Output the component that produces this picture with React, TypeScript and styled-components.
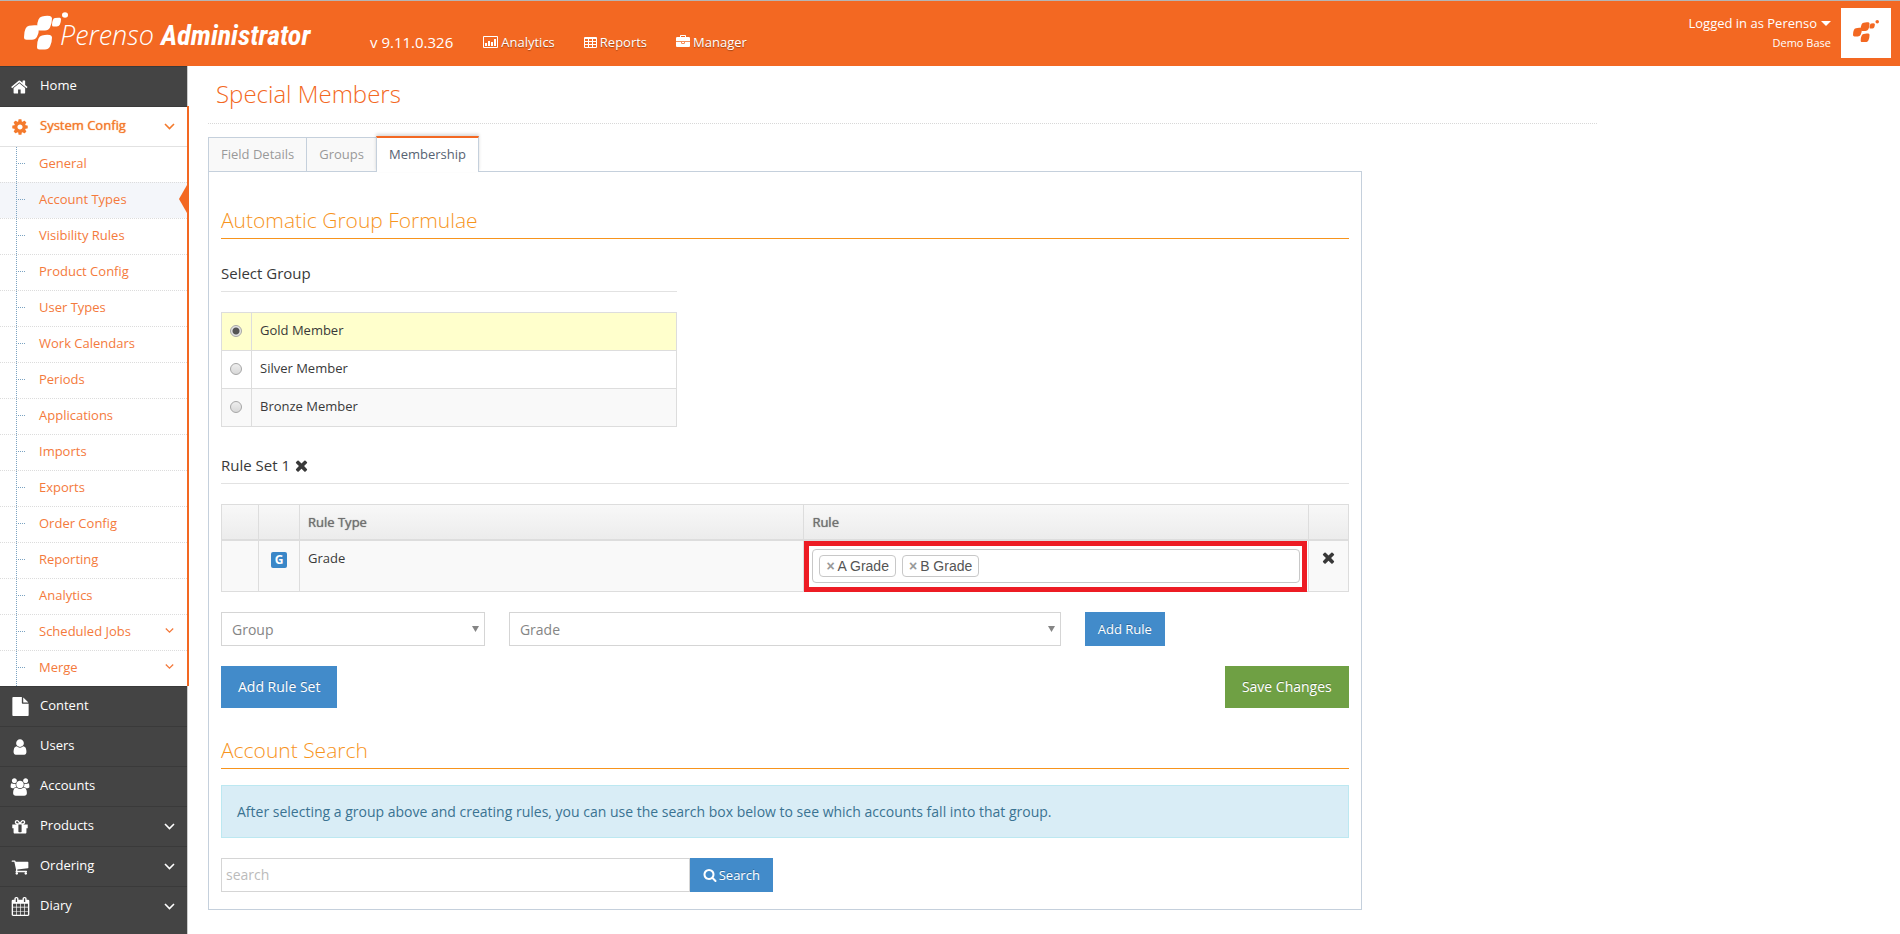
import React, { useState } from "react";
import styled, { createGlobalStyle, css } from "styled-components";

const brand = "#f36822";
const amber = "#f7941d";
const blue = "#428bca";

const Global = createGlobalStyle`
  * { box-sizing: border-box; }
  body {
    margin: 0;
    background: #fff;
    color: #393939;
    font: 13px/20px "Open Sans", sans-serif;
  }
  h1, h2, h3, ul { margin: 0; padding: 0; font-weight: 400; }
  ul { list-style: none; }
  a { color: inherit; text-decoration: none; }
  button, input, select { font-family: inherit; margin: 0; }
`;

/* ---------- icons ---------- */

const paths = {
  home: "M1408 992v480q0 26-19 45t-45 19h-384v-384h-256v384h-384q-26 0-45-19t-19-45v-480q0-1 .5-3t.5-3l575-474 575 474q1 2 1 6zm223-69l-62 74q-8 9-21 11h-3q-13 0-21-7l-692-577-692 577q-12 8-24 7-13-2-21-11l-62-74q-8-10-7-23.5t11-21.5l719-599q32-26 76-26t76 26l244 204v-195q0-14 9-23t23-9h192q14 0 23 9t9 23v408l219 182q10 8 11 21.5t-7 23.5z",
  cog: "M1152 896q0-106-75-181t-181-75-181 75-75 181 75 181 181 75 181-75 75-181zm512-109v222q0 12-8 23t-20 13l-185 28q-19 54-39 91 35 50 107 138 10 12 10 25t-9 23q-27 37-99 108t-94 71q-12 0-26-9l-138-108q-44 23-91 38-16 136-29 186-7 28-36 28h-222q-14 0-24.5-8.5t-11.5-21.5l-28-184q-49-16-90-37l-141 107q-10 9-25 9-14 0-25-11-126-114-165-168-7-10-7-23 0-12 8-23 15-21 51-66.5t54-70.5q-27-50-41-99l-183-27q-13-2-21-12.5t-8-23.5v-222q0-12 8-23t19-13l186-28q14-46 39-92-40-57-107-138-10-12-10-24 0-10 9-23 26-36 98.5-107.5t94.5-71.5q13 0 26 10l138 107q44-23 91-38 16-136 29-186 7-28 36-28h222q14 0 24.5 8.5t11.5 21.5l28 184q49 16 90 37l142-107q9-9 24-9 13 0 25 10 129 119 165 170 7 8 7 22 0 12-8 23-15 21-51 66.5t-54 70.5q26 50 41 98l183 28q13 2 21 12.5t8 23.5z",
  file: "M1152 512v-472q22 14 36 28l408 408q14 14 28 36h-472zm-128 32q0 40 28 68t68 28h544v1056q0 40-28 68t-68 28h-1344q-40 0-68-28t-28-68v-1600q0-40 28-68t68-28h800v544z",
  user: "M1536 1399q0 109-62.5 187t-150.5 78h-854q-88 0-150.5-78t-62.5-187q0-85 8.5-160.5t31.5-152 58.5-131 94-89 134.5-34.5q131 128 313 128t313-128q76 0 134.5 34.5t94 89 58.5 131 31.5 152 8.5 160.5zm-256-887q0 159-112.5 271.5t-271.5 112.5-271.5-112.5-112.5-271.5 112.5-271.5 271.5-112.5 271.5 112.5 112.5 271.5z",
  users: "M657 896q-162 5-265 128h-134q-82 0-138-40.5t-56-118.5q0-353 124-353 6 0 43.5 21t97.5 42.5 119 21.5q67 0 133-23-5 37-5 66 0 139 81 256zm1071 637q0 120-73 189.5t-194 69.5h-874q-121 0-194-69.5t-73-189.5q0-53 3.5-103.5t14-109 26.5-108.5 43-97.5 62-81 85.5-53.5 111.5-20q10 0 43 21.5t73 48 107 48 135 21.5 135-21.5 107-48 73-48 43-21.5q61 0 111.5 20t85.5 53.5 62 81 43 97.5 26.5 108.5 14 109 3.5 103.5zm-1024-1277q0 106-75 181t-181 75-181-75-75-181 75-181 181-75 181 75 75 181zm704 384q0 159-112.5 271.5t-271.5 112.5-271.5-112.5-112.5-271.5 112.5-271.5 271.5-112.5 271.5 112.5 112.5 271.5zm576 225q0 78-56 118.5t-138 40.5h-134q-103-123-265-128 81-117 81-256 0-29-5-66 66 23 133 23 59 0 119-21.5t97.5-42.5 43.5-21q124 0 124 353zm-128-609q0 106-75 181t-181 75-181-75-75-181 75-181 181-75 181 75 75 181z",
  gift: "M1056 1356v-716h-320v716q0 25 18 38.5t46 13.5h192q28 0 46-13.5t18-38.5zm-456-844h195l-126-161q-26-31-69-31-40 0-68 28t-28 68 28 68 68 28zm688-96q0-40-28-68t-68-28q-43 0-69 31l-125 161h194q40 0 68-28t28-68zm376 256v320q0 14-9 23t-23 9h-96v416q0 40-28 68t-68 28h-1088q-40 0-68-28t-28-68v-416h-96q-14 0-23-9t-9-23v-320q0-14 9-23t23-9h440q-93 0-158.5-65.5t-65.5-158.5 65.5-158.5 158.5-65.5q107 0 168 77l128 165 128-165q61-77 168-77 93 0 158.5 65.5t65.5 158.5-65.5 158.5-158.5 65.5h440q14 0 23 9t9 23z",
  cart: "M704 1536q0 52-38 90t-90 38-90-38-38-90 38-90 90-38 90 38 38 90zm896 0q0 52-38 90t-90 38-90-38-38-90 38-90 90-38 90 38 38 90zm128-1088v512q0 24-16.5 42.5t-40.5 21.5l-1044 122q13 60 13 70 0 16-24 64h920q26 0 45 19t19 45-19 45-45 19h-1024q-26 0-45-19t-19-45q0-11 8-31.5t16-36 21.5-40 15.5-29.5l-177-823h-204q-26 0-45-19t-19-45 19-45 45-19h256q16 0 28.5 6.5t19.5 15.5 13 24.5 8 26 5.5 29.5 4.5 26h1201q26 0 45 19t19 45z",
  calendar: "M192 1664h288v-288h-288v288zm352 0h320v-288h-320v288zm-352-352h288v-320h-288v320zm352 0h320v-320h-320v320zm-352-384h288v-288h-288v288zm736 736h320v-288h-320v288zm-384-736h320v-288h-320v288zm768 736h288v-288h-288v288zm-384-352h320v-320h-320v320zm-352-864v-288q0-13-9.5-22.5t-22.5-9.5h-64q-13 0-22.5 9.5t-9.5 22.5v288q0 13 9.5 22.5t22.5 9.5h64q13 0 22.5-9.5t9.5-22.5zm736 864h288v-320h-288v320zm-384-384h320v-288h-320v288zm384 0h288v-288h-288v288zm32-480v-288q0-13-9.5-22.5t-22.5-9.5h-64q-13 0-22.5 9.5t-9.5 22.5v288q0 13 9.5 22.5t22.5 9.5h64q13 0 22.5-9.5t9.5-22.5zm384-64v1280q0 52-38 90t-90 38h-1408q-52 0-90-38t-38-90v-1280q0-52 38-90t90-38h128v-96q0-66 47-113t113-47h64q66 0 113 47t47 113v96h384v-96q0-66 47-113t113-47h64q66 0 113 47t47 113v96h128q52 0 90 38t38 90z",
  briefcase: "M640 256h512v-128h-512v128zm1152 640v480q0 66-47 113t-113 47h-1472q-66 0-113-47t-47-113v-480h672v160q0 26 19 45t45 19h320q26 0 45-19t19-45v-160h672zm-768 0v128h-256v-128h256zm768-480v384h-1792v-384q0-66 47-113t113-47h352v-160q0-40 28-68t68-28h576q40 0 68 28t28 68v160h352q66 0 113 47t47 113z",
  search: "M1216 832q0-185-131.5-316.5t-316.5-131.5-316.5 131.5-131.5 316.5 131.5 316.5 316.5 131.5 316.5-131.5 131.5-316.5zm512 832q0 52-38 90t-90 38q-54 0-90-38l-343-342q-179 124-399 124-143 0-273.5-55.5t-225-150-150-225-55.5-273.5 55.5-273.5 150-225 225-150 273.5-55.5 273.5 55.5 225 150 150 225 55.5 273.5q0 220-124 399l343 343q37 37 37 90z",
  times: "M1490 1322q0 40-28 68l-136 136q-28 28-68 28t-68-28l-294-294-294 294q-28 28-68 28t-68-28l-136-136q-28-28-28-68t28-68l294-294-294-294q-28-28-28-68t28-68l136-136q28-28 68-28t68 28l294 294 294-294q28-28 68-28t68 28l136 136q28 28 28 68t-28 68l-294 294 294 294q28 28 28 68z",
};

type IconName = keyof typeof paths;

const Svg = styled.svg`
  display: block;
  flex: none;
`;

function Icon({ name, size }: { name: IconName; size: number }) {
  const wide = name === "users" ? 2048 : 1792;
  return (
    <Svg width={size} height={size} viewBox={`0 0 ${wide} 1792`} fill="currentColor" aria-hidden>
      <path d={paths[name]} />
    </Svg>
  );
}

const ChartIcon = () => (
  <Svg width="15" height="12" viewBox="0 0 15 12" aria-hidden>
    <path d="M1 0h13a1 1 0 0 1 1 1v10a1 1 0 0 1-1 1H1a1 1 0 0 1-1-1V1a1 1 0 0 1 1-1zm0 1v10h13V1z" fill="#fff" fillRule="evenodd" />
    <path d="M2 7h2v3H2zM5 5h2v5H5zM8 6h2v4H8zM11 3h2v7h-2z" fill="#fff" />
  </Svg>
);

const GridIcon = () => (
  <Svg width="13" height="11" viewBox="0 0 13 11" aria-hidden>
    <path
      d="M1 0h11a1 1 0 0 1 1 1v9a1 1 0 0 1-1 1H1a1 1 0 0 1-1-1V1a1 1 0 0 1 1-1zM1 2v2h3V2zm4 0v2h3V2zm4 0v2h3V2zM1 5v2h3V5zm4 0v2h3V5zm4 0v2h3V5zM1 8v2h3V8zm4 0v2h3V8zm4 0v2h3V8z"
      fill="#fff"
      fillRule="evenodd"
    />
  </Svg>
);

const Chevron = ({ size = 11 }: { size?: number }) => (
  <Svg width={size} height="7" viewBox="0 0 11 7" fill="none" stroke="currentColor" strokeWidth="1.6" aria-hidden>
    <path d="M1 1l4.500 4.500L10 1" />
  </Svg>
);

const petal = "M5 1Q9 0 13 .5Q15 1 15 3Q15 8 13 12Q11.500 15 8 15H2.500Q0 15 0 12.500Q0 7 1.500 4Q2.500 1.500 5 1Z";

const Mark = ({ width, color }: { width: number; color: string }) => (
  <Svg width={width} viewBox="0 0 44 38" fill={color} aria-hidden>
    <path d={petal} transform="translate(13 3.500)" />
    <path d={petal} transform="translate(0 12.800)" />
    <path d={petal} transform="translate(13 22.500)" />
    <path d={petal} transform="translate(28 5.500) scale(.6)" />
    <ellipse cx="41" cy="3" rx="3" ry="2.800" />
  </Svg>
);

/* ---------- top bar ---------- */

const TopBar = styled.header`
  display: flex;
  align-items: flex-start;
  height: 66px;
  background: ${brand};
  border-top: 1px solid #b5b5b5;
  color: #fff;
`;

const Brand = styled.a`
  display: flex;
  align-items: flex-start;
  width: 370px;
  padding: 11px 0 0 24px;
`;

const BrandText = styled.span`
  display: flex;
  align-items: baseline;
  gap: 7px;
  margin-left: -8px;
  padding-top: 8px;
  font-size: 27px;
  line-height: 30px;
  font-style: italic;
`;

const BrandLight = styled.span`
  font-weight: 300;
`;

const BrandBold = styled.span`
  font-family: "Liberation Sans Narrow", "Roboto Condensed", Roboto, sans-serif;
  font-size: 28px;
  font-weight: 700;
`;

const TopNav = styled.nav`
  display: flex;
  align-items: center;
  gap: 29px;
  padding-top: 30px;
`;

const Version = styled.span`
  padding-right: 1px;
  font-size: 15px;
  line-height: 22px;
`;

const TopLink = styled.a`
  display: flex;
  align-items: center;
  gap: 3px;
  text-shadow: 0 1px 1px rgba(0, 0, 0, 0.35);
`;

const Account = styled.div`
  display: flex;
  gap: 10px;
  margin-left: auto;
  padding: 7px 9px 0 0;
`;

const AccountText = styled.div`
  display: flex;
  flex-direction: column;
  align-items: flex-end;
  padding-top: 5px;
  font-size: 11px;
`;

const AccountButton = styled.button`
  display: flex;
  align-items: center;
  gap: 4px;
  padding: 0;
  border: 0;
  background: none;
  color: inherit;
  font-size: 13px;
  line-height: 20px;
`;

const Avatar = styled.div`
  display: flex;
  align-items: center;
  justify-content: center;
  width: 50px;
  height: 50px;
  padding-bottom: 4px;
  background: #fff;
`;

/* ---------- side menu ---------- */

const Shell = styled.div`
  display: flex;
  min-height: calc(100vh - 66px);
`;

const Sidebar = styled.nav`
  flex: none;
  width: 188px;
  background: #444;
  border-right: 1px solid #ccc;
`;

const SideItem = styled.li`
  position: relative;
`;

const OpenEdge = styled.span`
  position: absolute;
  z-index: 1;
  top: 0;
  bottom: 0;
  right: -2px;
  width: 2px;
  background: ${brand};
`;

const SideLink = styled.a<{ $open?: boolean }>`
  display: grid;
  grid-template-columns: 40px 1fr auto;
  align-items: center;
  height: 40px;
  padding-right: 12px;
  border-top: 1px solid #3a3a3a;
  color: #fff;
  ${(p) =>
    p.$open &&
    css`
      background: #fff;
      color: #f47a2c;
      text-shadow: 0 0 1px #f47a2c;
    `}
`;

const SideIcon = styled.span`
  display: flex;
  justify-content: center;
`;

const SideLabel = styled.span`
  padding-bottom: 3px;
`;

const SubMenu = styled.ul`
  position: relative;
  background: #fff;
  color: #f47a3c;
  &::before {
    content: "";
    position: absolute;
    z-index: 1;
    top: 1px;
    bottom: 0;
    left: 16px;
    border-left: 1px dotted #7ba3c2;
  }
`;

const SubLink = styled.a<{ $current?: boolean }>`
  position: relative;
  display: flex;
  align-items: center;
  justify-content: space-between;
  height: 36px;
  padding: 0 13px 4px 39px;
  border-top: 1px dotted #dcdcdc;
  background: ${(p) => (p.$current ? "#f4f6fa" : "#fff")};
  li:first-child > & {
    border-top: 1px solid #e2e2e2;
  }
  &::before {
    content: "";
    position: absolute;
    left: 18px;
    top: 16px;
    width: 7px;
    border-top: 1px dotted #7ba3c2;
  }
  ${(p) =>
    p.$current &&
    css`
      &::after {
        content: "";
        position: absolute;
        right: 0;
        top: 2px;
        border: solid transparent;
        border-width: 14px 8px 14px 0;
        border-right-color: ${brand};
      }
    `}
`;

/* ---------- page ---------- */

const Page = styled.main`
  flex: 1;
  min-width: 0;
  padding: 8px 20px 24px;
`;

const Columns = styled.div`
  display: grid;
  grid-template-columns: repeat(12, minmax(0, 1fr));
  column-gap: 24px;
`;

const Col = styled.div<{ $span: number }>`
  grid-column: span ${(p) => p.$span};
`;

const PageTitle = styled.h1`
  margin-bottom: 12px;
  padding: 0 8px 9px;
  border-bottom: 1px dotted #d8d8d8;
  color: ${brand};
  font-size: 24px;
  font-weight: 300;
  line-height: 40px;
`;

const Tabs = styled.div`
  display: flex;
  align-items: flex-end;
  height: 35px;
`;

const Tab = styled.button<{ $active?: boolean }>`
  position: relative;
  height: 35px;
  margin-bottom: -1px;
  margin-right: -1px;
  padding: 0 12px 2px;
  border: 1px solid #c5d0dc;
  background: #f9f9f9;
  color: #999;
  font-size: 13px;
  line-height: 20px;
  ${(p) =>
    p.$active &&
    css`
      z-index: 1;
      height: 36px;
      padding-bottom: 3px;
      border-top: 2px solid ${brand};
      border-bottom: 0;
      background: #fff;
      color: #576373;
      box-shadow: 0 -2px 3px rgba(0, 0, 0, 0.15);
    `}
`;

const Panel = styled.section`
  padding: 33px 12px 17px;
  border: 1px solid #c5d0dc;
`;

const SectionTitle = styled.h2`
  padding-bottom: 3px;
  border-bottom: 1px solid ${amber};
  color: ${amber};
  font-size: 21px;
  font-weight: 300;
  line-height: 30px;
`;

const SubTitle = styled.h3`
  display: flex;
  align-items: center;
  gap: 3px;
  margin-bottom: 20px;
  padding-bottom: 9px;
  border-bottom: 1px solid #e2e2e2;
  font-size: 15px;
  line-height: 18px;
`;

const Block = styled.div<{ $top: number }>`
  margin-top: ${(p) => p.$top}px;
`;

const Table = styled.table`
  width: 100%;
  table-layout: fixed;
  border-collapse: separate;
  border-spacing: 0;
  border: solid #ddd;
  border-width: 1px 0 0 1px;
`;

const Cell = styled.td<{ $center?: boolean }>`
  padding: 8px;
  border: solid #ddd;
  border-width: 0 1px 1px 0;
  vertical-align: top;
  line-height: 18px;
  text-align: ${(p) => (p.$center ? "center" : "left")};
`;

const HeadCell = styled.th`
  height: 36px;
  padding: 0 8px;
  border: solid #ddd;
  border-width: 0 1px 2px 0;
  background: linear-gradient(#f8f8f8, #ececec);
  color: #707070;
  font-weight: 400;
  text-align: left;
  text-shadow: 0 0 1px #707070;
`;

const GroupRow = styled.tr<{ $selected: boolean }>`
  height: 38px;
  &:nth-child(odd) {
    background: #f9f9f9;
  }
  && {
    ${(p) => p.$selected && "background: #ffffcc;"}
  }
`;

const GroupLabel = styled.label`
  display: block;
`;

const Radio = styled.input`
  appearance: none;
  display: block;
  width: 12px;
  height: 12px;
  margin: 4px 0 0;
  border: 1px solid #a6a6a6;
  border-radius: 50%;
  background: linear-gradient(#eee, #d8d8d8);
  &:checked {
    background: radial-gradient(circle, #555 0 3px, #e4e4e4 4px);
  }
`;

const RuleRow = styled.tr`
  background: #f9f9f9;
`;

const RuleCell = styled(Cell)`
  position: relative;
  background: #fff;
`;

const Highlight = styled.span`
  position: absolute;
  inset: 0 1px -1px 0;
  border: 5px solid #ed1c24;
  pointer-events: none;
`;

const Badge = styled.span`
  display: block;
  width: 16px;
  margin: 3px auto 0;
  border-radius: 2px;
  background: #3a87c8;
  color: #fff;
  font-size: 12px;
  font-weight: 700;
  line-height: 16px;
`;

const IconButton = styled.button`
  display: inline-flex;
  padding: 0;
  border: 0;
  background: none;
  color: #393939;
`;

const ChipBox = styled.div`
  display: flex;
  align-items: center;
  gap: 6px;
  height: 34px;
  padding: 0 6px;
  border: 1px solid #c8c8c8;
  border-radius: 4px;
  background: #fff;
`;

const Chip = styled.span`
  display: flex;
  align-items: center;
  gap: 3px;
  height: 22px;
  padding: 0 6px;
  border: 1px solid #c8c8c8;
  border-radius: 4px;
  color: #555;
  font: 14px/20px "Liberation Sans", Arial, sans-serif;
`;

const ChipRemove = styled.button`
  padding: 0;
  border: 0;
  background: none;
  color: #999;
  font: 700 14px/18px "Liberation Sans", Arial, sans-serif;
`;

const SelectWrap = styled.div`
  position: relative;
`;

const Select = styled.select`
  appearance: none;
  width: 100%;
  height: 34px;
  padding: 0 24px 0 10px;
  border: 1px solid #d5d5d5;
  border-radius: 0;
  background: #fff;
  color: #858585;
  font-size: 14px;
`;

const SelectArrow = styled.span`
  position: absolute;
  right: 6px;
  top: 14px;
  color: #858585;
  pointer-events: none;
`;

const Button = styled.button<{ $tone?: "green"; $large?: boolean }>`
  display: flex;
  align-items: center;
  gap: 2px;
  height: ${(p) => (p.$large ? 42 : 34)}px;
  padding: ${(p) => (p.$large ? "0 17px 2px" : "0 13px")};
  border: 0;
  background: ${(p) => (p.$tone === "green" ? "#6fa044" : blue)};
  color: #fff;
  font-size: ${(p) => (p.$large ? 14 : 13)}px;
  text-shadow: 0 -1px 0 rgba(0, 0, 0, 0.25);
`;

const ButtonRow = styled.div`
  display: flex;
  justify-content: space-between;
  margin-top: 20px;
`;

const Notice = styled.p`
  margin: 16px 0 20px;
  padding: 15px;
  border: 1px solid #bce8f1;
  background: #d9edf6;
  color: #3a7392;
  font-size: 14px;
  line-height: 21px;
`;

const SearchForm = styled.form`
  display: flex;
`;

const SearchInput = styled.input`
  flex: 1;
  min-width: 0;
  height: 34px;
  padding: 0 4px 2px;
  border: 1px solid #d5d5d5;
  font-size: 14px;
  &::placeholder {
    color: #bbb;
  }
`;

/* ---------- data ---------- */

const configPages = [
  "General", "Account Types", "Visibility Rules", "Product Config", "User Types",
  "Work Calendars", "Periods", "Applications", "Imports", "Exports",
  "Order Config", "Reporting", "Analytics", "Scheduled Jobs", "Merge",
];
const expandable = ["Scheduled Jobs", "Merge"];

const sections: { label: string; icon: IconName; size: number; more?: boolean }[] = [
  { label: "Content", icon: "file", size: 19 },
  { label: "Users", icon: "user", size: 18 },
  { label: "Accounts", icon: "users", size: 20 },
  { label: "Products", icon: "gift", size: 18, more: true },
  { label: "Ordering", icon: "cart", size: 18, more: true },
  { label: "Diary", icon: "calendar", size: 19, more: true },
];

const groups = ["Gold Member", "Silver Member", "Bronze Member"];
const grades = ["A Grade", "B Grade"];

function DropDown({ label, value }: { label: string; value: string }) {
  return (
    <SelectWrap>
      <Select aria-label={label}><option>{value}</option></Select>
      <SelectArrow>
        <Svg width="7" height="6" viewBox="0 0 7 6" fill="currentColor" aria-hidden><path d="M0 0h7L3.500 6z" /></Svg>
      </SelectArrow>
    </SelectWrap>
  );
}

export default function App() {
  const [group, setGroup] = useState(groups[0]);

  return (
    <>
      <Global />
      <TopBar>
        <Brand href="#">
          <Mark width={44} color="#fff" />
          <BrandText>
            <BrandLight>Perenso</BrandLight>
            <BrandBold>Administrator</BrandBold>
          </BrandText>
        </Brand>
        <TopNav>
          <Version>v 9.11.0.326</Version>
          <TopLink href="#"><ChartIcon />Analytics</TopLink>
          <TopLink href="#"><GridIcon />Reports</TopLink>
          <TopLink href="#"><Icon name="briefcase" size={14} />Manager</TopLink>
        </TopNav>
        <Account>
          <AccountText>
            <AccountButton type="button">
              Logged in as Perenso
              <Svg width="10" height="5" viewBox="0 0 10 5" fill="#fff" aria-hidden><path d="M0 0h10L5 5z" /></Svg>
            </AccountButton>
            <span>Demo Base</span>
          </AccountText>
          <Avatar><Mark width={26} color={brand} /></Avatar>
        </Account>
      </TopBar>

      <Shell>
        <Sidebar>
          <ul>
            <SideItem>
              <SideLink href="#">
                <SideIcon><Icon name="home" size={18} /></SideIcon>
                <SideLabel>Home</SideLabel>
              </SideLink>
            </SideItem>
            <SideItem>
              <OpenEdge />
              <SideLink href="#" $open>
                <SideIcon><Icon name="cog" size={18} /></SideIcon>
                <SideLabel>System Config</SideLabel>
                <Chevron />
              </SideLink>
              <SubMenu>
                {configPages.map((label) => (
                  <li key={label}>
                    <SubLink href="#" $current={label === "Account Types"}>
                      {label}
                      {expandable.includes(label) && <Chevron size={9} />}
                    </SubLink>
                  </li>
                ))}
              </SubMenu>
            </SideItem>
            {sections.map((s) => (
              <SideItem key={s.label}>
                <SideLink href="#">
                  <SideIcon><Icon name={s.icon} size={s.size} /></SideIcon>
                  <SideLabel>{s.label}</SideLabel>
                  {s.more && <Chevron />}
                </SideLink>
              </SideItem>
            ))}
          </ul>
        </Sidebar>

        <Page>
          <Columns>
            <Col $span={10}>
              <PageTitle>Special Members</PageTitle>
              <Columns>
                <Col $span={10}>
                  <Tabs role="tablist">
                    <Tab role="tab">Field Details</Tab>
                    <Tab role="tab">Groups</Tab>
                    <Tab role="tab" aria-selected $active>Membership</Tab>
                  </Tabs>
                  <Panel>
                    <SectionTitle>Automatic Group Formulae</SectionTitle>
                    <Block $top={25}>
                      <Columns>
                        <Col $span={5}>
                          <SubTitle>Select Group</SubTitle>
                          <Table>
                            <colgroup>
                              <col width="30" />
                              <col />
                            </colgroup>
                            <tbody>
                              {groups.map((g) => (
                                <GroupRow key={g} $selected={g === group}>
                                  <Cell>
                                    <Radio
                                      type="radio"
                                      name="group"
                                      id={g}
                                      checked={g === group}
                                      onChange={() => setGroup(g)}
                                    />
                                  </Cell>
                                  <Cell><GroupLabel htmlFor={g}>{g}</GroupLabel></Cell>
                                </GroupRow>
                              ))}
                            </tbody>
                          </Table>
                        </Col>
                      </Columns>
                    </Block>

                    <Block $top={29}>
                      <SubTitle>
                        Rule Set 1
                        <IconButton type="button" aria-label="Remove rule set"><Icon name="times" size={17} /></IconButton>
                      </SubTitle>
                      <Table>
                        <colgroup>
                          <col width="37" />
                          <col width="41" />
                          <col />
                          <col />
                          <col width="40" />
                        </colgroup>
                        <thead>
                          <tr>
                            <HeadCell />
                            <HeadCell />
                            <HeadCell>Rule Type</HeadCell>
                            <HeadCell>Rule</HeadCell>
                            <HeadCell />
                          </tr>
                        </thead>
                        <tbody>
                          <RuleRow>
                            <Cell />
                            <Cell $center><Badge>G</Badge></Cell>
                            <Cell>Grade</Cell>
                            <RuleCell>
                              <ChipBox>
                                {grades.map((g) => (
                                  <Chip key={g}>
                                    <ChipRemove type="button" aria-label={`Remove ${g}`}>×</ChipRemove>
                                    {g}
                                  </Chip>
                                ))}
                              </ChipBox>
                              <Highlight />
                            </RuleCell>
                            <Cell $center>
                              <IconButton type="button" aria-label="Remove rule"><Icon name="times" size={17} /></IconButton>
                            </Cell>
                          </RuleRow>
                        </tbody>
                      </Table>
                    </Block>

                    <Block $top={20}>
                      <Columns>
                        <Col $span={3}><DropDown label="Rule type" value="Group" /></Col>
                        <Col $span={6}><DropDown label="Rule value" value="Grade" /></Col>
                        <Col $span={3}><Button type="button">Add Rule</Button></Col>
                      </Columns>
                    </Block>

                    <ButtonRow>
                      <Button type="button" $large>Add Rule Set</Button>
                      <Button type="button" $large $tone="green">Save Changes</Button>
                    </ButtonRow>

                    <Block $top={27}>
                      <SectionTitle>Account Search</SectionTitle>
                      <Notice>
                        After selecting a group above and creating rules, you can use the search box below to see which accounts fall into that group.
                      </Notice>
                      <Columns>
                        <Col $span={6}>
                          <SearchForm onSubmit={(e) => e.preventDefault()}>
                            <SearchInput type="text" placeholder="search" aria-label="Search accounts" />
                            <Button type="submit"><Icon name="search" size={14} />Search</Button>
                          </SearchForm>
                        </Col>
                      </Columns>
                    </Block>
                  </Panel>
                </Col>
              </Columns>
            </Col>
          </Columns>
        </Page>
      </Shell>
    </>
  );
}
